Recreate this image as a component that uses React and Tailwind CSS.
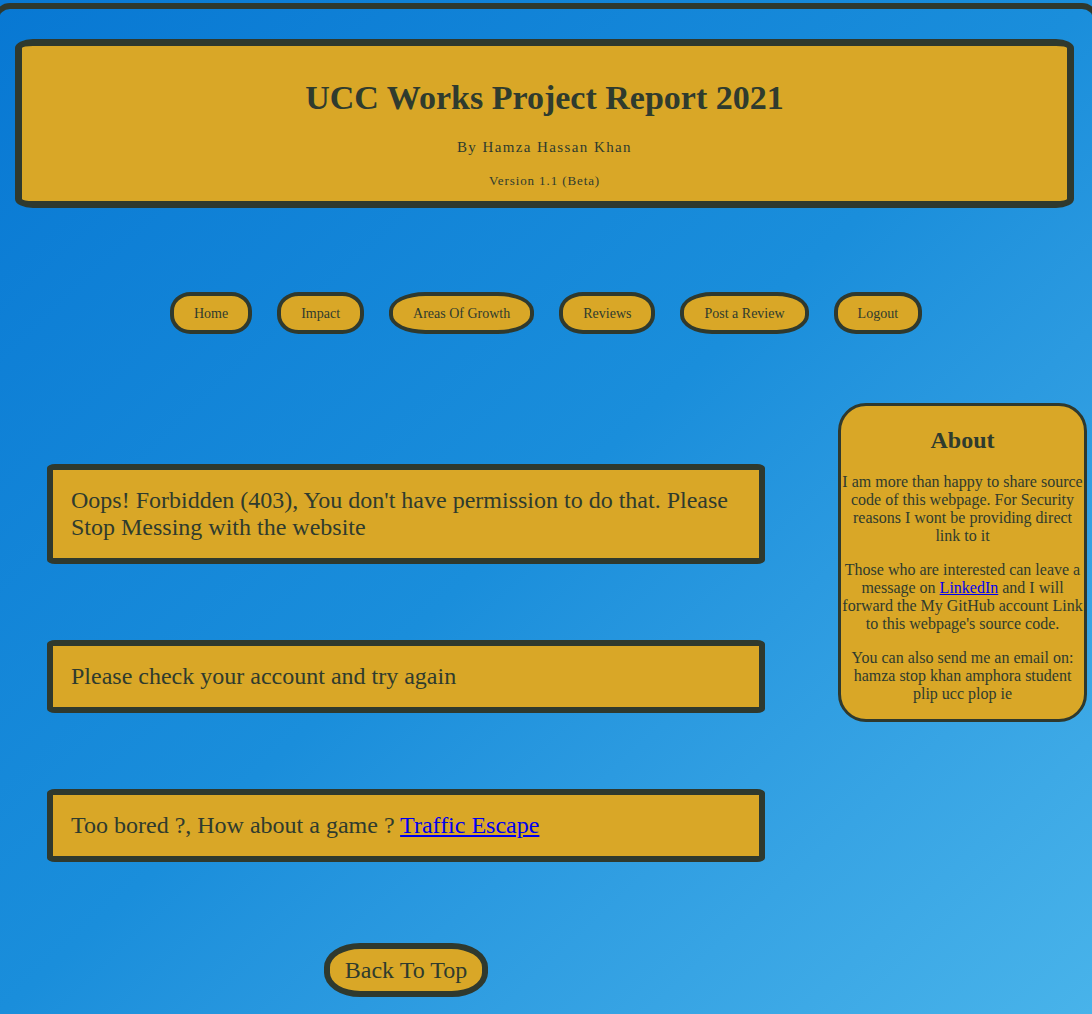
const navItems = ['Home', 'Impact', 'Areas Of Growth', 'Reviews', 'Post a Review', 'Logout']

function MessageBox({ children }) {
  return (
    <div className="bg-[#d9a727] border-[6px] border-[#2f392e] rounded-[8px/4px] pl-[18px] pr-[12px] py-[17px] text-[24px] leading-[27px]">
      {children}
    </div>
  )
}

export default function App() {
  return (
    <div className="min-h-[1014px] overflow-hidden bg-linear-to-br from-[#0878d3] via-[#1a8edb] to-[#48b3ea] text-[#2f3b2e] font-[family-name:'Liberation_Serif','Times_New_Roman',serif]">
      <div className="-mx-[6px] mt-[3px] border-t-[6px] border-x-[5px] border-[#2f392e] rounded-t-[16px] pb-[16px]">
        <header className="mt-[30px] ml-[16px] mr-[19px] bg-[#d9a727] border-[7px] border-[#2f392e] rounded-[18px/9px] text-center pt-[32px] pb-[11px]">
          <h1 className="text-[34px] leading-[40px] font-bold">UCC Works Project Report 2021</h1>
          <p className="mt-[19px] text-[15px] leading-[20px] tracking-[1.4px]">By Hamza Hassan Khan</p>
          <p className="mt-[15px] text-[13px] leading-[18px] tracking-[0.9px]">Version 1.1 (Beta)</p>
        </header>

        <nav className="mt-[84px] flex justify-center gap-[25px]">
          {navItems.map(item => (
            <a
              key={item}
              href="#"
              className="h-[42px] flex items-center px-[20px] bg-[#d9a727] border-[4px] border-[#2f392e] rounded-[25%/45%] text-[14px]"
            >{item}</a>
          ))}
        </nav>

        <div className="mt-[69px] flex items-start">
          <div className="ml-[48px] w-[718px] pt-[61px]">
            <MessageBox>
              Oops! Forbidden (403), You don't have permission to do that. Please Stop Messing with the website
            </MessageBox>
            <div className="mt-[76px]">
              <MessageBox>Please check your account and try again</MessageBox>
            </div>
            <div className="mt-[76px]">
              <MessageBox>
                Too bored ?, How about a game ? <a href="#" className="text-[#0000ee] underline">Traffic Escape</a>
              </MessageBox>
            </div>
            <div className="mt-[81px] flex justify-center">
              <a
                href="#"
                className="h-[54px] flex items-center px-[15px] bg-[#d9a727] border-[6px] border-[#2f392e] rounded-[22%/45%] text-[24px]"
              >Back To Top</a>
            </div>
          </div>

          <aside className="ml-auto mr-[6px] w-[249px] bg-[#d9a727] border-[3px] border-[#2f392e] rounded-[28px] text-center text-[16px] leading-[18px] px-[1px] pt-[20px] pb-[16px]">
            <h2 className="text-[24px] leading-[28px] font-bold">About</h2>
            <p className="mt-[19px]">I am more than happy to share source code of this webpage. For Security reasons I wont be providing direct link to it</p>
            <p className="mt-[16px]">
              Those who are interested can leave a message on <a href="#" className="text-[#0000ee] underline">LinkedIn</a> and I will forward the My GitHub account Link to this webpage's source code.
            </p>
            <p className="mt-[16px]">You can also send me an email on: hamza stop khan amphora student plip ucc plop ie</p>
          </aside>
        </div>
      </div>
    </div>
  )
}
